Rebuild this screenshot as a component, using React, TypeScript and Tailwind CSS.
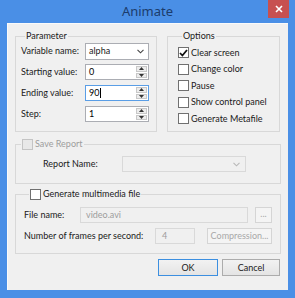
import React from "react";

function Chevron({ color = "#444" }: { color?: string }) {
  return (
    <svg width="7" height="5" viewBox="0 0 7 5">
      <path d="M0.5 0.8 L3.5 3.8 L6.5 0.8" fill="none" stroke={color} strokeWidth="1.1" />
    </svg>
  );
}

function Spinner() {
  return (
    <div className="flex flex-col w-[12px] h-full py-[1px] pr-[1px] gap-[1px]">
      <div className="flex-1 flex items-center justify-center border border-[#c8c8c8] bg-[#ececec]">
        <svg width="5" height="3" viewBox="0 0 5 3">
          <path d="M0 3 L2.5 0 L5 3 Z" fill="#333" />
        </svg>
      </div>
      <div className="flex-1 flex items-center justify-center border border-[#c8c8c8] bg-[#ececec]">
        <svg width="5" height="3" viewBox="0 0 5 3">
          <path d="M0 0 L2.5 3 L5 0 Z" fill="#333" />
        </svg>
      </div>
    </div>
  );
}

function SpinInput({ value, focused }: { value: string; focused?: boolean }) {
  return (
    <div
      className={
        "w-[64px] h-[16px] bg-white border flex items-stretch " +
        (focused ? "border-[#5a9ee6]" : "border-[#abadb3]")
      }
    >
      <div className="flex-1 flex items-center pl-[3px] text-black">
        {value}
        {focused && <span className="inline-block w-[1px] h-[10px] bg-black ml-[1px]" />}
      </div>
      <Spinner />
    </div>
  );
}

function Check({ checked, disabled }: { checked?: boolean; disabled?: boolean }) {
  return (
    <div
      className={
        "w-[11px] h-[11px] shrink-0 border flex items-center justify-center " +
        (disabled ? "border-[#c4c4c4] bg-[#e8e8e8]" : "border-[#707070] bg-white")
      }
    >
      {checked && (
        <svg width="9" height="8" viewBox="0 0 9 8">
          <path d="M1 4 L3.4 6.5 L8 1" fill="none" stroke="#111" strokeWidth="1.8" />
        </svg>
      )}
    </div>
  );
}

export default function App() {
  return (
    <div className="w-[295px] h-[298px] bg-[#4a8fe6] flex flex-col font-['Lato',sans-serif] text-[9px] leading-[12px] text-[#1a1a1a] overflow-hidden">
      {/* title bar */}
      <div className="h-[23px] relative flex items-center justify-center">
        <span className="text-[13px] text-[#1c3c6c] font-['Noto_Sans',sans-serif] mt-[-1px]">Animate</span>
        <div className="absolute right-[6px] top-0 w-[21px] h-[18px] bg-[#c75050] flex items-center justify-center">
          <svg width="8" height="8" viewBox="0 0 8 8">
            <path d="M1 1 L7 7 M7 1 L1 7" stroke="#fff" strokeWidth="1.6" />
          </svg>
        </div>
      </div>

      {/* content */}
      <div className="mx-[7px] h-[267px] bg-[#f0f0f0] border-t border-l border-[#fafafa] px-[7px] pt-[6px] flex flex-col">
        <div className="flex gap-[10px] h-[102px]">
          <fieldset className="w-[142px] border border-[#d8d8d8] pl-[5px] pr-[7px]">
            <legend className="ml-[4px] px-[1px]">Parameter</legend>
            <div className="flex flex-col gap-[5px] mt-[1px]">
              <div className="flex items-center justify-between h-[16px]">
                <span>Variable name:</span>
                <div className="w-[64px] h-[17px] bg-white border border-[#abadb3] flex items-center justify-between pl-[3px] pr-[4px]">
                  <span>alpha</span>
                  <Chevron />
                </div>
              </div>
              <div className="flex items-center justify-between h-[16px]">
                <span>Starting value:</span>
                <SpinInput value="0" />
              </div>
              <div className="flex items-center justify-between h-[16px]">
                <span>Ending value:</span>
                <SpinInput value="90" focused />
              </div>
              <div className="flex items-center justify-between h-[16px]">
                <span>Step:</span>
                <SpinInput value="1" />
              </div>
            </div>
          </fieldset>
          <fieldset className="w-[113px] border border-[#d8d8d8] pl-[10px]">
            <legend className="ml-[4px] px-[1px]">Options</legend>
            <div className="flex flex-col gap-[5.5px] mt-[5px]">
              {[
                ["Clear screen", true],
                ["Change color", false],
                ["Pause", false],
                ["Show control panel", false],
                ["Generate Metafile", false],
              ].map(([label, c]) => (
                <div key={label as string} className="flex items-center gap-[2px] h-[11px]">
                  <Check checked={c as boolean} />
                  <span>{label as string}</span>
                </div>
              ))}
            </div>
          </fieldset>
        </div>

        <fieldset className="mt-[6px] h-[46px] border border-[#d8d8d8]">
          <legend className="ml-[5px] px-[1px] flex items-center gap-[2px] text-[#9d9d9d]">
            <Check disabled />
            <span>Save Report</span>
          </legend>
          <div className="flex items-center mt-[6px] pl-[27px] h-[16px]">
            <span className="w-[79px]">Report Name:</span>
            <div className="w-[124px] h-[16px] border border-[#d9d9d9] bg-[#f0f0f0] flex items-center justify-end pr-[5px]">
              <Chevron color="#b8b8b8" />
            </div>
          </div>
        </fieldset>

        <fieldset className="mt-[4px] h-[66px] border border-[#d8d8d8] pl-[8px]">
          <legend className="ml-[5px] px-[1px] flex items-center gap-[2px]">
            <Check />
            <span>Generate multimedia file</span>
          </legend>
          <div className="flex items-center h-[16px] mt-[7px]">
            <span className="w-[56px]">File name:</span>
            <div className="w-[168px] h-[16px] border border-[#d9d9d9] bg-[#f0f0f0] flex items-center pl-[5px] text-[#9d9d9d]">
              video.avi
            </div>
            <div className="ml-[7px] w-[17px] h-[16px] border border-[#d5d5d5] bg-[#f4f4f4] flex items-center justify-center text-[#a8a8a8] pb-[3px]">
              ...
            </div>
          </div>
          <div className="flex items-center h-[16px] mt-[5px]">
            <span className="w-[131px]">Number of frames per second:</span>
            <div className="w-[40px] h-[16px] border border-[#d9d9d9] bg-[#f0f0f0] flex items-center pl-[6px] text-[#9d9d9d]">
              4
            </div>
            <div className="ml-[12px] w-[65px] h-[16px] border border-[#d5d5d5] bg-[#f4f4f4] flex items-center justify-center text-[#a8a8a8]">
              Compression...
            </div>
          </div>
        </fieldset>

        <div className="flex justify-end gap-[4px] mt-[5px] pr-[1px]">
          <div className="w-[60px] h-[17px] border border-[#3c8fe0] bg-gradient-to-b from-[#f2f2f2] to-[#e4e4e4] flex items-center justify-center">
            OK
          </div>
          <div className="w-[58px] h-[17px] border border-[#acacac] bg-gradient-to-b from-[#f2f2f2] to-[#e4e4e4] flex items-center justify-center">
            Cancel
          </div>
        </div>
      </div>
    </div>
  );
}
